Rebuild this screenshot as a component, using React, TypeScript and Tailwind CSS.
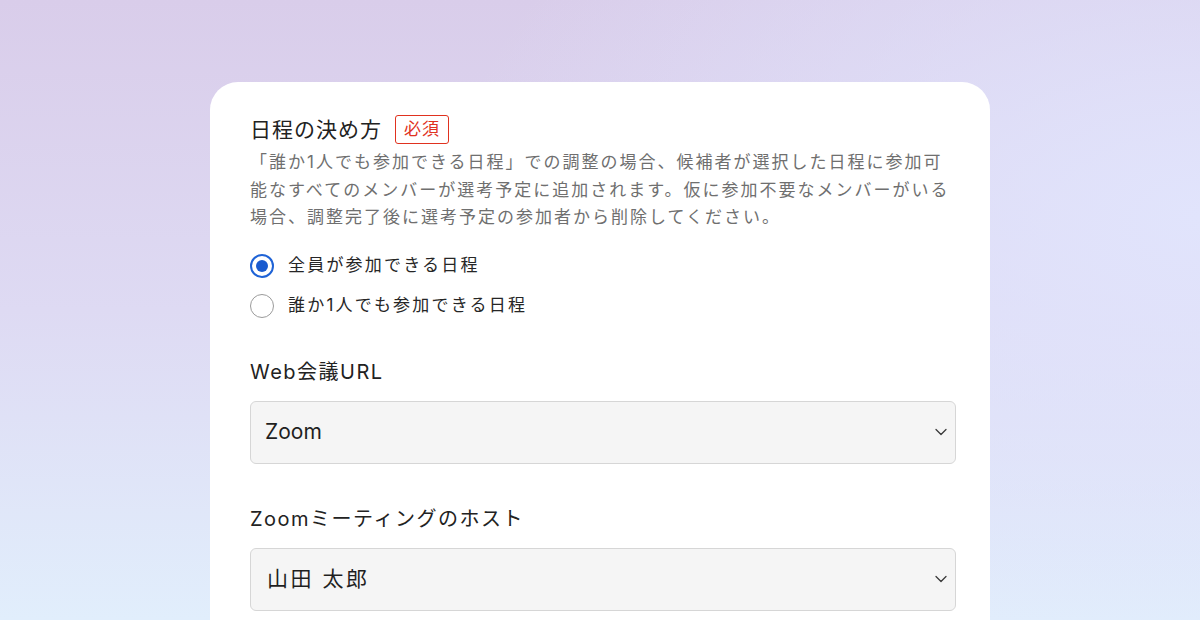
import React from 'react';

const font = "font-['Inter','Noto_Sans_CJK_JP',sans-serif]";

const Radio: React.FC<{ checked?: boolean; label: string }> = ({ checked, label }) => (
  <label className="flex items-center h-10 gap-[14px]">
    <span
      className={`w-6 h-6 rounded-full flex items-center justify-center ${
        checked ? 'border-2 border-[#1f63d6]' : 'border-[1.5px] border-[#9b9b9b]'
      }`}
    >
      {checked && <span className="w-3 h-3 rounded-full bg-[#1a5bcf]" />}
    </span>
    <span className="text-[17px] tracking-[2.2px] text-[#262626]">{label}</span>
  </label>
);

const SelectBox: React.FC<{ value: string; wide?: boolean }> = ({ value, wide }) => (
  <div className="h-[63px] rounded-[6px] border border-[#d6d6d6] bg-[#f5f5f5] flex items-center justify-between pl-[14px] pr-[8px]">
    <span className={`text-[21px] text-[#1f1f1f] ${wide ? 'tracking-[2.5px] pl-[2px]' : 'tracking-[0px]'}`}>{value}</span>
    <svg width="12" height="8" viewBox="0 0 12 8" fill="none">
      <path d="M1 1.5l5 5 5-5" stroke="#3a3a3a" strokeWidth="1.3" strokeLinecap="round" strokeLinejoin="round" />
    </svg>
  </div>
);

export default function App() {
  return (
    <div
      className={`${font} h-[620px] w-full overflow-hidden flex justify-center pt-[82px] bg-[radial-gradient(ellipse_90%_110%_at_100%_35%,#e1e4fc_0%,rgba(225,228,252,0)_70%),linear-gradient(180deg,#d9cdea_0%,#dedaf3_50%,#e1eefc_100%)]`}
    >
      <div className="w-[780px] h-[600px] shrink-0 rounded-[28px] bg-white pl-10 pr-[34px] pt-[31px]">
        <div className="flex items-center gap-[13px] h-[33px]">
          <h2 className="text-[21px] tracking-[1px] text-[#222]">日程の決め方</h2>
          <span className="h-[29px] px-[8px] flex items-center rounded-[3px] border-[1.5px] border-[#e0321f] text-[17px] tracking-[1px] text-[#e0321f]">
            必須
          </span>
        </div>
        <p className="mt-[3px] text-[17px] leading-[27.5px] tracking-[2px] text-[#6f6f6f]">
          「誰か1人でも参加できる日程」での調整の場合、候補者が選択した日程に参加可能なすべてのメンバーが選考予定に追加されます。仮に参加不要なメンバーがいる場合、調整完了後に選考予定の参加者から削除してください。
        </p>
        <div className="mt-[14px] flex flex-col">
          <Radio checked label="全員が参加できる日程" />
          <Radio label="誰か1人でも参加できる日程" />
        </div>

        <div className="mt-[31px] text-[20px] tracking-[1.5px] text-[#222] leading-[30px]">Web会議URL</div>
        <div className="mt-[14px]">
          <SelectBox value="Zoom" />
        </div>

        <div className="mt-[40px] text-[20px] tracking-[1.5px] text-[#222] leading-[30px]">Zoomミーティングのホスト</div>
        <div className="mt-[14px]">
          <SelectBox value="山田 太郎" wide />
        </div>
      </div>
    </div>
  );
}
